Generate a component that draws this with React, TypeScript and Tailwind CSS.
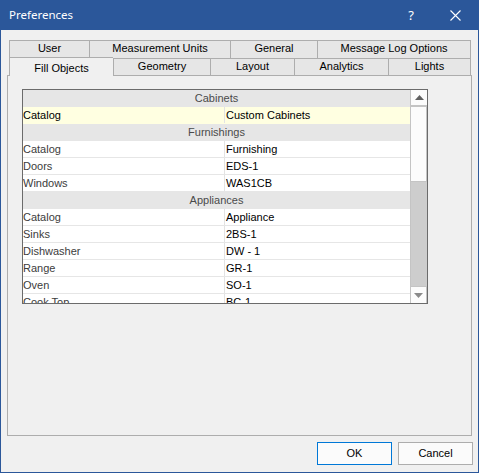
import React from "react";

type Row =
  | { kind: "header"; text: string }
  | { kind: "item"; label: string; value: string; selected?: boolean };

const rows: Row[] = [
  { kind: "header", text: "Cabinets" },
  { kind: "item", label: "Catalog", value: "Custom Cabinets", selected: true },
  { kind: "header", text: "Furnishings" },
  { kind: "item", label: "Catalog", value: "Furnishing" },
  { kind: "item", label: "Doors", value: "EDS-1" },
  { kind: "item", label: "Windows", value: "WAS1CB" },
  { kind: "header", text: "Appliances" },
  { kind: "item", label: "Catalog", value: "Appliance" },
  { kind: "item", label: "Sinks", value: "2BS-1" },
  { kind: "item", label: "Dishwasher", value: "DW - 1" },
  { kind: "item", label: "Range", value: "GR-1" },
  { kind: "item", label: "Oven", value: "SO-1" },
  { kind: "item", label: "Cook Top", value: "BC-1" },
];

const row1 = [
  { t: "User", w: "w-[80px]" },
  { t: "Measurement Units", w: "w-[141px]" },
  { t: "General", w: "w-[87px]" },
  { t: "Message Log Options", w: "w-[154px]", last: true },
];

const row2 = [
  { t: "Fill Objects", w: "w-[104px]", sel: true },
  { t: "Geometry", w: "w-[97px]" },
  { t: "Layout", w: "w-[84px]" },
  { t: "Analytics", w: "w-[94px]" },
  { t: "Lights", w: "w-[83px]", last: true },
];

export default function App() {
  return (
    <div className="w-[479px] h-[473px] bg-[#2b579a] flex flex-col px-px pb-px font-['Liberation_Sans',Arial,sans-serif] text-[11px] text-black">
      {/* Title bar */}
      <div className="h-[30px] shrink-0 flex items-center text-white">
        <span className="pl-[8px] font-['Noto_Sans',sans-serif] text-[11.5px] leading-none">
          Preferences
        </span>
        <span className="ml-auto mr-[36px] font-['Noto_Sans',sans-serif] text-[13px] leading-none">
          ?
        </span>
        <svg width="11" height="11" viewBox="0 0 11 11" className="mr-[17px]">
          <path d="M0.5 0.5 L10.5 10.5 M10.5 0.5 L0.5 10.5" stroke="white" strokeWidth="1.1" fill="none" />
        </svg>
      </div>

      {/* Client area */}
      <div className="flex-1 bg-[#f0f0f0] flex flex-col pt-[10px] px-[6px]">
        {/* Tabs */}
        <div className="pl-[2px] pr-[1px] flex flex-col">
          <div className="flex h-[18px]">
            {row1.map((t) => (
              <div
                key={t.t}
                className={`${t.w} h-[18px] shrink-0 bg-[#e6e6e6] border-t border-l border-[#adadad] ${
                  t.last ? "border-r" : ""
                } flex justify-center leading-[14px]`}
              >
                {t.t}
              </div>
            ))}
          </div>
          <div className="flex h-[17px] items-end">
            {row2.map((t) =>
              t.sel ? (
                <div
                  key={t.t}
                  className={`${t.w} h-[19px] mb-[-1px] shrink-0 relative z-10 bg-[#f0f0f0] border-t border-l border-[#adadad] flex justify-center pt-[3px] leading-[14px]`}
                >
                  {t.t}
                </div>
              ) : (
                <div
                  key={t.t}
                  className={`${t.w} h-[17px] shrink-0 bg-[#e6e6e6] border-t border-l border-[#adadad] ${
                    t.last ? "border-r" : ""
                  } flex justify-center leading-[14px]`}
                >
                  {t.t}
                </div>
              )
            )}
          </div>
        </div>

        {/* Tab page */}
        <div className="h-[361px] shrink-0 border border-[#adadad] bg-[#f0f0f0] pl-[14px] pt-[13px]">
          <div className="w-[406px] h-[215px] border border-[#6b6b6b] bg-white flex">
            <div className="w-[387px] flex flex-col overflow-hidden">
              {rows.map((r, i) =>
                r.kind === "header" ? (
                  <div
                    key={i}
                    className="h-[17px] shrink-0 bg-[#e6e6e6] text-[#4a4a4a] text-center leading-[16px]"
                  >
                    {r.text}
                  </div>
                ) : (
                  <div
                    key={i}
                    className={`h-[17px] shrink-0 flex border-b ${
                      r.selected ? "bg-[#ffffe1] border-[#ffffe1]" : "bg-white border-[#e6e6e6]"
                    } leading-[16px]`}
                  >
                    <div className={`w-[201px] shrink-0 ${r.selected ? "text-black" : "text-[#3c3c3c]"}`}>
                      {r.label}
                    </div>
                    <div className="flex-1 border-l border-[#e3e3e3] pl-[1px] text-black">{r.value}</div>
                  </div>
                )
              )}
            </div>
            {/* Scrollbar */}
            <div className="w-[17px] flex flex-col bg-[#cdcdcd] border-l border-[#c4c4c4]">
              <div className="h-[17px] shrink-0 bg-[#fcfcfc] border-b-2 border-[#c4c4c4] flex items-center justify-center">
                <svg width="9" height="5" viewBox="0 0 9 5">
                  <path d="M4.5 0 L9 5 L0 5 Z" fill="#606060" />
                </svg>
              </div>
              <div className="h-[75px] shrink-0 bg-[#fcfcfc] border-r border-b border-[#c4c4c4]" />
              <div className="flex-1" />
              <div className="h-[17px] shrink-0 bg-[#fcfcfc] border-t border-r border-[#c4c4c4] flex items-center justify-center">
                <svg width="9" height="5" viewBox="0 0 9 5">
                  <path d="M0 0 L9 0 L4.5 5 Z" fill="#8a8a8a" />
                </svg>
              </div>
            </div>
          </div>
        </div>

        {/* Buttons */}
        <div className="flex justify-end gap-[6px] mt-[6px] mr-[-1px]">
          <button className="w-[75px] h-[23px] bg-[#fbfbfb] border border-[#0078d7] text-[11px] leading-none">
            OK
          </button>
          <button className="w-[75px] h-[23px] bg-[#fbfbfb] border border-[#adadad] text-[11px] leading-none">
            Cancel
          </button>
        </div>
      </div>
    </div>
  );
}
